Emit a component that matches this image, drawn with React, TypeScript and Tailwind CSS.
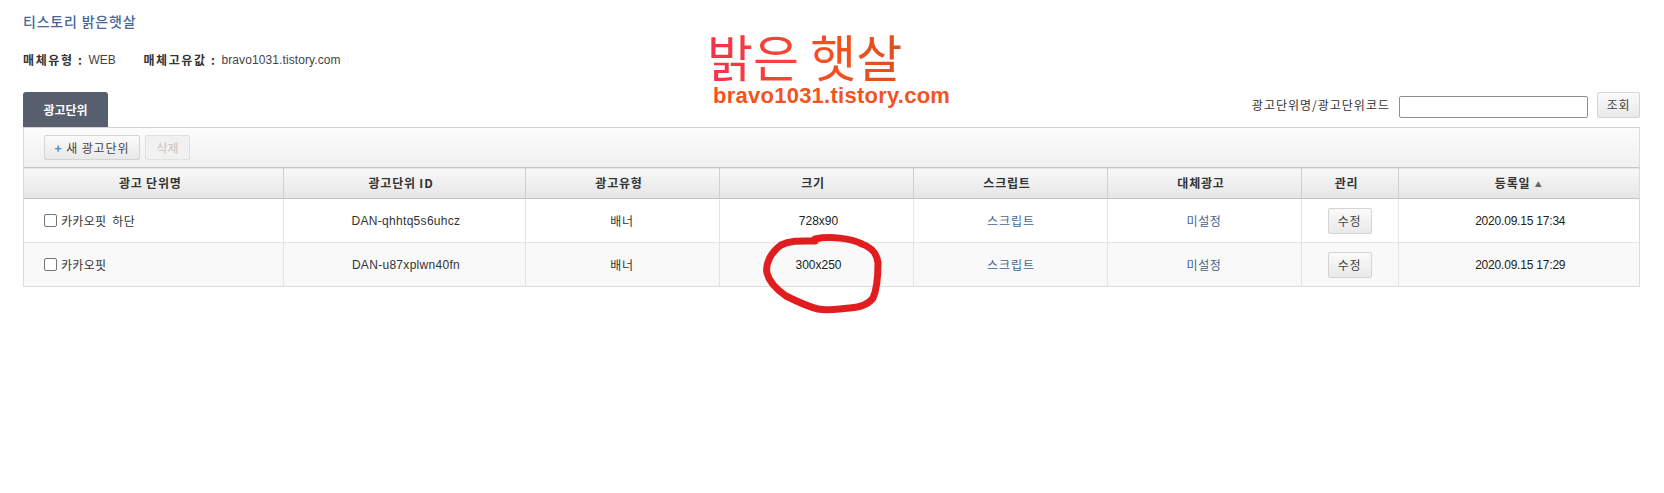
import React from 'react'

const columns = [
  { label: '광고 단위명', width: 'w-[259px]' },
  { label: '광고단위 ID', width: 'w-[242px]' },
  { label: '광고유형', width: 'w-[194px]' },
  { label: '크기', width: 'w-[194px]' },
  { label: '스크립트', width: 'w-[194px]' },
  { label: '대체광고', width: 'w-[194px]' },
  { label: '관리', width: 'w-[97px]' },
]

const rows = [
  { name: '카카오핏 하단', id: 'DAN-qhhtq5s6uhcz', type: '배너', size: '728x90', date: '2020.09.15 17:34' },
  { name: '카카오핏', id: 'DAN-u87xplwn40fn', type: '배너', size: '300x250', date: '2020.09.15 17:29' },
]

function GrayButton({ children, className = '' }: { children: React.ReactNode; className?: string }) {
  return (
    <button className={'rounded-[2px] border border-[#d4d4d4] bg-gradient-to-b from-[#fafafa] to-[#e9e9e9] text-[12px] tracking-[0.6px] text-[#444] ' + className}>
      {children}
    </button>
  )
}

export default function App() {
  return (
    <div className="relative h-[493px] w-[1664px] overflow-hidden bg-white pl-[23px] pr-[24px] pt-[12px] text-[12px] text-[#222] font-['Noto_Sans_CJK_KR','Liberation_Sans',sans-serif]">
      <h1 className="h-[18px] text-[14px] leading-[18px] font-medium tracking-[0.8px] text-[#46679b]">티스토리 밝은햇살</h1>

      <div className="mt-[21px] flex h-[18px] items-center leading-[18px]">
        <strong className="font-bold tracking-[1.6px] text-[#333]">매체유형 :</strong>
        <span className="ml-[5px] w-[55px] font-['Liberation_Sans'] text-[#444]">WEB</span>
        <strong className="font-bold tracking-[1.6px] text-[#333]">매체고유값 :</strong>
        <span className="ml-[5px] font-['Liberation_Sans'] tracking-[0.1px] text-[#444]">bravo1031.tistory.com</span>
      </div>

      <div className="mt-[23px] flex h-[35px] items-start justify-between">
        <div className="flex h-[35px] w-[85px] items-center justify-center rounded-t-[3px] bg-[#575e6d] font-bold text-white">광고단위</div>
        <div className="flex items-center">
          <label className="tracking-[1px] text-[#333]">광고단위명/광고단위코드</label>
          <input className="ml-[9px] mt-[3px] h-[22px] w-[189px] rounded-[2px] border border-[#8f8f8f] bg-white" />
          <GrayButton className="ml-[9px] h-[26px] w-[43px]">조회</GrayButton>
        </div>
      </div>

      <div className="border-x border-[#dcdcdc]">
        <div className="flex h-[40px] items-center gap-[3px] border-t border-[#d2d2d2] bg-gradient-to-b from-[#fcfcfc] to-[#f0f0f0] pl-[20px]">
          <GrayButton className="h-[25px] w-[96px] tracking-[0.9px]">
            <span className="font-bold text-[#4a86c8]">+</span> 새 광고단위
          </GrayButton>
          <button className="ml-[2px] h-[25px] w-[45px] rounded-[2px] border border-[#e0e0e0] bg-[#f1f1f1] text-[12px] text-[#c4c4c4]">삭제</button>
        </div>

        <table className="w-full table-fixed border-collapse">
          <thead>
            <tr className="h-[31px] border-y border-[#c4c4c4] bg-gradient-to-b from-[#f8f8f8] to-[#e6e6e6]">
              {columns.map((col) => (
                <th key={col.label} className={col.width + ' border-r border-[#cfcfcf] p-0 pr-[6px] text-center font-bold tracking-[0.8px] text-[#333]'}>
                  {col.label}
                </th>
              ))}
              <th className="p-0 text-center font-bold tracking-[0.8px] text-[#333]">
                등록일 <span className="ml-[1px] align-[1px] text-[7px] text-[#666]">▲</span>
              </th>
            </tr>
          </thead>
          <tbody>
            {rows.map((row, i) => (
              <tr key={row.id} className={i === 0 ? 'h-[44px] border-b border-[#e4e4e4] bg-white' : 'h-[44px] border-b border-[#dcdcdc] bg-[#f9f9f9]'}>
                <td className="border-r border-[#e4e4e4] p-0 pl-[20px]">
                  <label className="flex items-center gap-[4px] tracking-[0.3px] [word-spacing:3px] text-[#333]">
                    <span className="h-[13px] w-[13px] rounded-[2px] border border-[#767676] bg-white" />
                    {row.name}
                  </label>
                </td>
                <td className="border-r border-[#e4e4e4] p-0 pl-[4px] text-center font-['Liberation_Sans'] tracking-[0.3px] text-[#333]">{row.id}</td>
                <td className="border-r border-[#e4e4e4] p-0 text-center tracking-[0.6px] text-[#333]">{row.type}</td>
                <td className="border-r border-[#e4e4e4] p-0 pl-[5px] text-center font-['Liberation_Sans'] text-[#222]">{row.size}</td>
                <td className="border-r border-[#e4e4e4] p-0 pl-[2px] text-center tracking-[1px] text-[#44648f]">스크립트</td>
                <td className="border-r border-[#e4e4e4] p-0 text-center tracking-[0.6px] text-[#44648f]">미설정</td>
                <td className="border-r border-[#e4e4e4] p-0 text-center">
                  <GrayButton className="h-[26px] w-[44px]">수정</GrayButton>
                </td>
                <td className="p-0 pl-[3px] text-center font-['Liberation_Sans'] tracking-[-0.2px] text-[#222]">{row.date}</td>
              </tr>
            ))}
          </tbody>
        </table>
      </div>

      {/* watermark pasted over the page */}
      <div className="absolute left-[704px] top-[27px] flex w-[260px] flex-col">
        <span className="ml-[3px] h-[57px] bg-gradient-to-r from-[#f4304a] via-[#f4501e] to-[#c8501e] bg-clip-text text-[50px] leading-[57px] font-normal text-transparent">밝은 햇살</span>
        <span className="ml-[9px] font-['Liberation_Sans'] text-[22px] leading-[24px] font-bold tracking-[0.25px] text-[#f4531f]">bravo1031.tistory.com</span>
      </div>

      {/* red marker circle round the size cell */}
      <svg className="absolute left-[755px] top-[228px]" width="136" height="94" viewBox="755 228 136 94" fill="none">
        <path
          d="M815 239C830 236 850 238 862 244C873 248 877 254 878 263C878 277 877 289 873 298C869 304 862 307 850 308C838 309 826 311 818 309C806 306 796 301 786 296C776 289 769 282 767 273C765 264 771 252 781 245C791 240 803 241 815 241"
          stroke="#e11d20"
          strokeWidth="7"
          strokeLinecap="round"
          strokeLinejoin="round"
        />
      </svg>
    </div>
  )
}
